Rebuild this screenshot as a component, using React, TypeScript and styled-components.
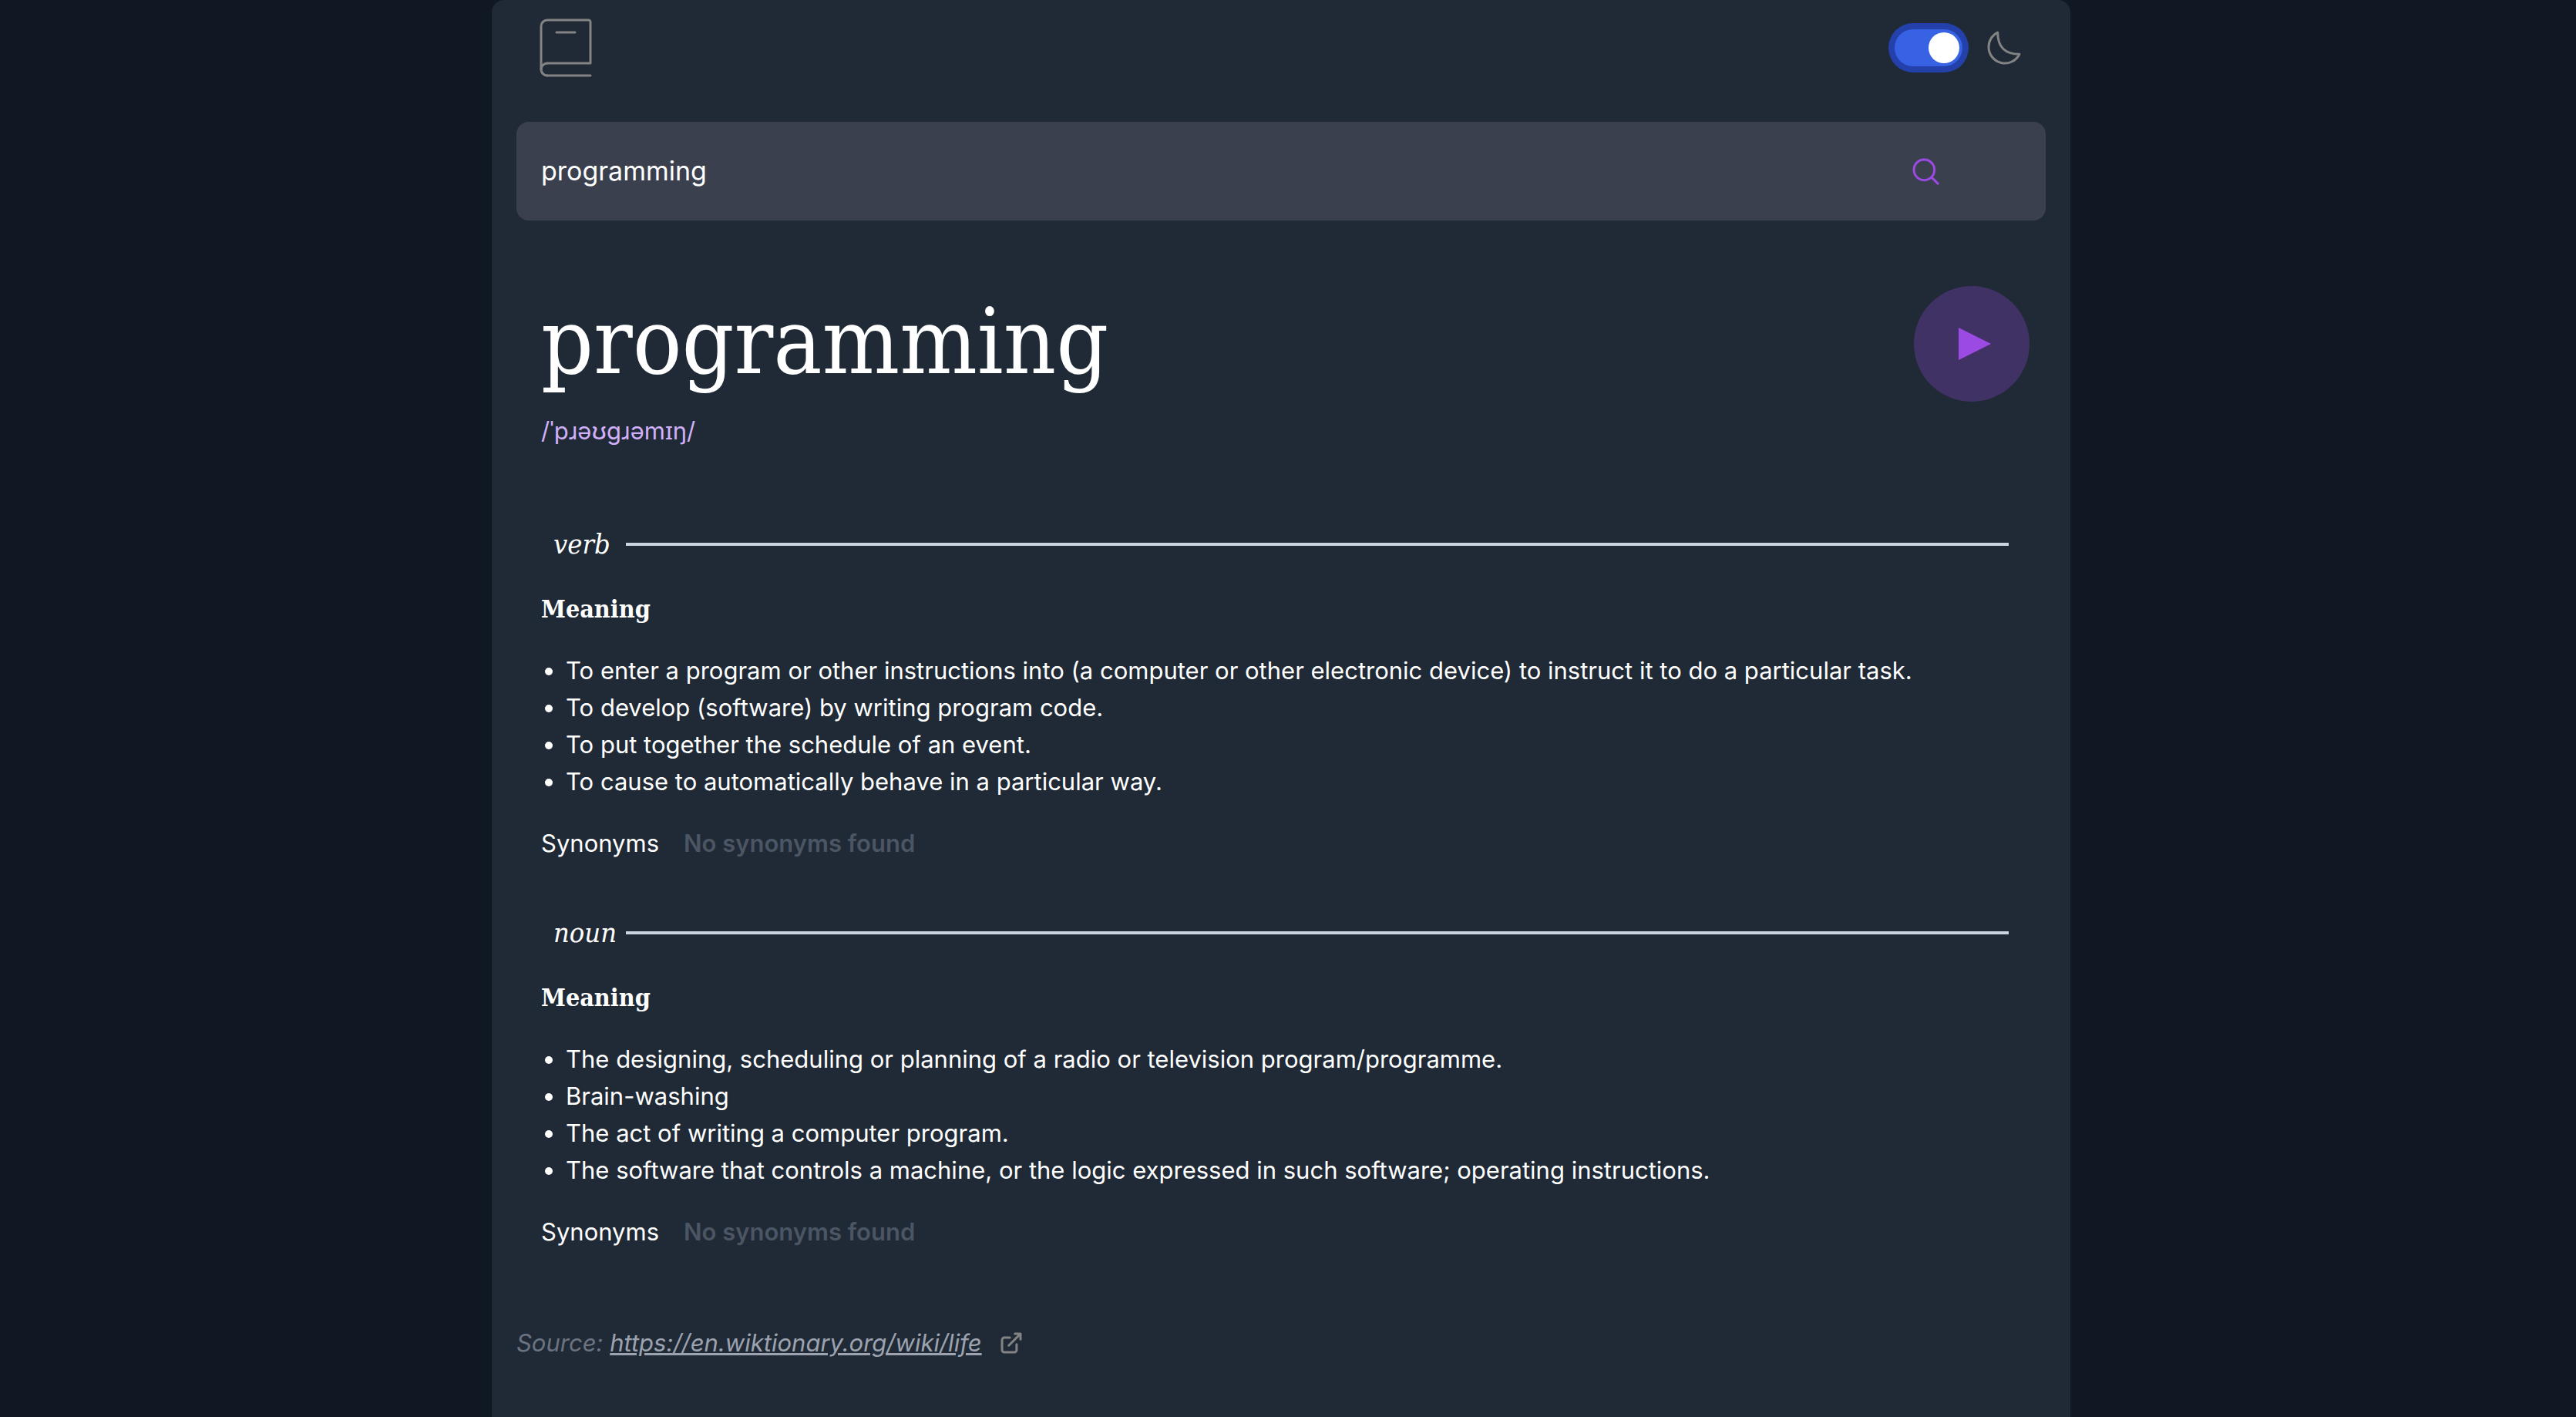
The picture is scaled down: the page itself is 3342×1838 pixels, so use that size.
import { useState } from "react";
import styled, { createGlobalStyle } from "styled-components";

const sans = `Inter, "Noto Sans", "Liberation Sans", sans-serif`;
const serif = `"DejaVu Serif Condensed", "DejaVu Serif", serif`;
const accent = "#9c4ae4";

const GlobalStyle = createGlobalStyle`
  *, *::before, *::after { box-sizing: border-box; }
  body {
    margin: 0;
    padding-right: 18px;
    background: #101824;
    color: #ffffff;
    font-family: ${sans};
    font-size: 31px;
    line-height: 48px;
  }
  h1, h2, h3, p, ul { margin: 0; }
`;

const Panel = styled.div`
  max-width: 2048px;
  min-height: 100vh;
  margin: 0 auto;
  padding: 0 32px 72px;
  border-radius: 16px 16px 0 0;
  background: #202a36;
`;

const Header = styled.header`
  display: flex;
  align-items: center;
  justify-content: space-between;
  padding: 24px 32px 58px 30px;
`;

const Drawing = styled.svg<{ $color?: string }>`
  display: block;
  flex: none;
  overflow: visible;
  fill: none;
  stroke: ${(p) => p.$color ?? "#838383"};
  stroke-width: 1.5;
  stroke-linecap: round;
  stroke-linejoin: round;
`;

const ThemeLabel = styled.label`
  display: flex;
  align-items: center;
  gap: 32px;
  cursor: pointer;
`;

const Toggle = styled.input`
  appearance: none;
  display: flex;
  align-items: center;
  width: 88px;
  height: 48px;
  margin: 0;
  padding: 0 4px;
  border-radius: 24px;
  background: #4b5563;
  box-shadow: 0 0 0 8px #2441ab;
  outline: none;
  cursor: pointer;

  &::before {
    content: "";
    width: 40px;
    height: 40px;
    border-radius: 50%;
    background: #ffffff;
  }

  &:checked {
    justify-content: flex-end;
    background: #3662e3;
  }
`;

const SearchForm = styled.form`
  display: flex;
  align-items: center;
  height: 128px;
  padding: 0 139px 0 32px;
  border-radius: 16px;
  background: #3b404e;
`;

const SearchInput = styled.input`
  flex: 1;
  min-width: 0;
  padding: 0;
  border: 0;
  outline: none;
  background: transparent;
  color: #ffffff;
  font-family: ${sans};
  font-size: 34px;
  line-height: 56px;
`;

const IconButton = styled.button`
  padding: 0;
  border: 0;
  background: transparent;
  cursor: pointer;
`;

const PlayIcon = styled.svg`
  display: block;
  fill: ${accent};
`;

const Entry = styled.section`
  display: flex;
  align-items: flex-start;
  justify-content: space-between;
  padding: 85px 21px 99px 32px;
`;

const Word = styled.h1`
  font-family: ${serif};
  font-size: 118px;
  font-weight: 400;
  line-height: 144px;
`;

const Phonetic = styled.p`
  margin-top: 20px;
  color: #d0b0f8;
`;

const Meanings = styled.main`
  display: flex;
  flex-direction: column;
  gap: 68px;
  padding: 0 32px;
`;

const PartHeader = styled.div`
  display: grid;
  grid-template-columns: 94px 1fr;
  align-items: center;
  padding: 0 16px;
`;

const PartName = styled.h2`
  font-family: ${serif};
  font-size: 36px;
  font-style: italic;
  font-weight: 400;
  line-height: 48px;
`;

const Rule = styled.hr`
  width: 100%;
  height: 4px;
  margin: 0;
  border: 0;
  background: #cbd5e1;
`;

const MeaningTitle = styled.h3`
  margin: 36px 0 32px;
  font-family: ${serif};
  font-size: 32px;
  font-weight: 700;
  line-height: 48px;
`;

const Definitions = styled.ul`
  padding-left: 32px;
  list-style: disc;
`;

const Synonyms = styled.div`
  display: flex;
  gap: 32px;
  margin-top: 32px;
`;

const NoSynonyms = styled.p`
  color: #4b5563;
  font-weight: 600;
`;

const Footer = styled.footer`
  display: flex;
  align-items: center;
  gap: 24px;
  margin-top: 96px;
  color: #6b7280;
  font-style: italic;
`;

const SourceLink = styled.a`
  color: #9ca3af;
  text-decoration: underline;
`;

const parts = [
  {
    name: "verb",
    definitions: [
      "To enter a program or other instructions into (a computer or other electronic device) to instruct it to do a particular task.",
      "To develop (software) by writing program code.",
      "To put together the schedule of an event.",
      "To cause to automatically behave in a particular way.",
    ],
  },
  {
    name: "noun",
    definitions: [
      "The designing, scheduling or planning of a radio or television program/programme.",
      "Brain-washing",
      "The act of writing a computer program.",
      "The software that controls a machine, or the logic expressed in such software; operating instructions.",
    ],
  },
];

export default function App() {
  const [query, setQuery] = useState("programming");
  const [dark, setDark] = useState(true);

  return (
    <>
      <GlobalStyle />
      <Panel>
        <Header>
          <Drawing width="68" height="76" viewBox="0 0 34 38" aria-hidden="true">
            <path d="M1 33V5a4 4 0 0 1 4-4h26.8A1.2 1.2 0 0 1 33 2.2V29M5 29h28M5 37h28" />
            <path d="M5 37a4 4 0 1 1 0-8" />
            <path d="M11 9h12" />
          </Drawing>
          <ThemeLabel>
            <Toggle
              type="checkbox"
              role="switch"
              aria-label="Dark mode"
              checked={dark}
              onChange={(e) => setDark(e.target.checked)}
            />
            <Drawing width="44" height="44" viewBox="0 0 22 22" aria-hidden="true">
              <path d="M1 10.449a10.544 10.544 0 0 0 19.993 4.686C11.544 15.135 6.858 10.448 6.858 1A10.545 10.545 0 0 0 1 10.449Z" />
            </Drawing>
          </ThemeLabel>
        </Header>

        <SearchForm role="search" onSubmit={(e) => e.preventDefault()}>
          <SearchInput
            type="text"
            aria-label="Search for a word"
            value={query}
            onChange={(e) => setQuery(e.target.value)}
          />
          <IconButton type="submit" aria-label="Search">
            <Drawing $color={accent} width="34" height="34" viewBox="0 0 17 17">
              <path d="m12.663 12.663 3.887 3.887M1 7.664a6.665 6.665 0 1 0 13.33 0 6.665 6.665 0 0 0-13.33 0Z" />
            </Drawing>
          </IconButton>
        </SearchForm>

        <Entry>
          <div>
            <Word>programming</Word>
            <Phonetic>/ˈpɹəʊɡɹəmɪŋ/</Phonetic>
          </div>
          <IconButton type="button" aria-label="Play pronunciation">
            <PlayIcon width="150" height="150" viewBox="0 0 75 75">
              <circle cx="37.5" cy="37.5" r="37.5" opacity="0.27" />
              <path d="M29 27v21l21-10.5z" />
            </PlayIcon>
          </IconButton>
        </Entry>

        <Meanings>
          {parts.map((part) => (
            <section key={part.name}>
              <PartHeader>
                <PartName>{part.name}</PartName>
                <Rule />
              </PartHeader>
              <MeaningTitle>Meaning</MeaningTitle>
              <Definitions>
                {part.definitions.map((text) => (
                  <li key={text}>{text}</li>
                ))}
              </Definitions>
              <Synonyms>
                <p>Synonyms</p>
                <NoSynonyms>No synonyms found</NoSynonyms>
              </Synonyms>
            </section>
          ))}
        </Meanings>

        <Footer>
          <p>
            Source: <SourceLink href="https://en.wiktionary.org/wiki/life">https://en.wiktionary.org/wiki/life</SourceLink>
          </p>
          <Drawing width="28" height="28" viewBox="0 0 14 14" aria-hidden="true">
            <path d="M6.09 3.545H2.456A1.455 1.455 0 0 0 1 5v6.545A1.455 1.455 0 0 0 2.455 13H9a1.455 1.455 0 0 0 1.455-1.455V7.91m-5.091.727L13 1m0 0H9.364M13 1v3.636" />
          </Drawing>
        </Footer>
      </Panel>
    </>
  );
}
